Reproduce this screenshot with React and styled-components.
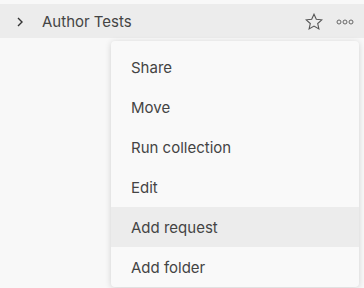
import React, { useState } from 'react';
import styled, { createGlobalStyle } from 'styled-components';

const GlobalStyle = createGlobalStyle`
      body {
            margin: 0;
            background: #f8f8f8;
            font-family: Inter, "Noto Sans", sans-serif;
      }
`;

const Root = styled.div`
      width: 364px;
      height: 288px;
      padding-top: 4px;
      box-sizing: border-box;
      overflow: hidden;
`;

const Row = styled.div`
      display: flex;
      align-items: center;
      height: 34px;
      background: #ececec;
      padding: 1px 10px 0 16px;
      box-sizing: border-box;
      color: #444;
`;

const Chevron = styled.span`
      display: flex;
      width: 10px;
      margin-right: 16px;
`;

const Title = styled.span`
      flex: 1;
      font-size: 15px;
      line-height: 20px;
`;

const IconButton = styled.span`
      display: flex;
      align-items: center;
      justify-content: center;
      margin-left: ${(p) => p.gap || 0}px;
`;

const MenuWrap = styled.div`
      display: flex;
      justify-content: flex-end;
      padding: 3px 5px 0 0;
`;

const Menu = styled.div`
      width: 248px;
      background: #f9f9f9;
      border-radius: 4px;
      box-shadow: 0 1px 6px rgba(0, 0, 0, 0.16);
      padding-top: 6px;
`;

const Item = styled.div`
      height: 40px;
      display: flex;
      align-items: center;
      padding-left: 20px;
      font-size: 15px;
      color: #444;
      background: ${(p) => (p.active ? '#ececec' : 'transparent')};
`;

const items = ['Share', 'Move', 'Run collection', 'Edit', 'Add request', 'Add folder'];

const App = () => {
      const [active] = useState('Add request');

      return (
            <Root>
                  <GlobalStyle />
                  <Row>
                        <Chevron>
                              <svg width="8" height="10" viewBox="0 0 8 10">
                                    <path d="M2 1l4 4-4 4" fill="none" stroke="#333" strokeWidth="1.4" />
                              </svg>
                        </Chevron>
                        <Title>Author Tests</Title>
                        <IconButton>
                              <svg width="18" height="18" viewBox="0 0 18 18">
                                    <path
                                          d="M9 1.2l2.3 5 5.5.6-4.1 3.7 1.2 5.4L9 13.1l-4.9 2.8 1.2-5.4-4.1-3.7 5.5-.6z"
                                          fill="none"
                                          stroke="#555"
                                          strokeWidth="1.1"
                                    />
                              </svg>
                        </IconButton>
                        <IconButton gap={13}>
                              <svg width="18" height="6" viewBox="0 0 18 6">
                                    <circle cx="3" cy="3" r="2" fill="none" stroke="#666" strokeWidth="1" />
                                    <circle cx="9" cy="3" r="2" fill="none" stroke="#666" strokeWidth="1" />
                                    <circle cx="15" cy="3" r="2" fill="none" stroke="#666" strokeWidth="1" />
                              </svg>
                        </IconButton>
                  </Row>
                  <MenuWrap>
                        <Menu>
                              {items.map((label) => (
                                    <Item key={label} active={label === active}>{label}</Item>
                              ))}
                        </Menu>
                  </MenuWrap>
            </Root>
      );
};

export default App;
